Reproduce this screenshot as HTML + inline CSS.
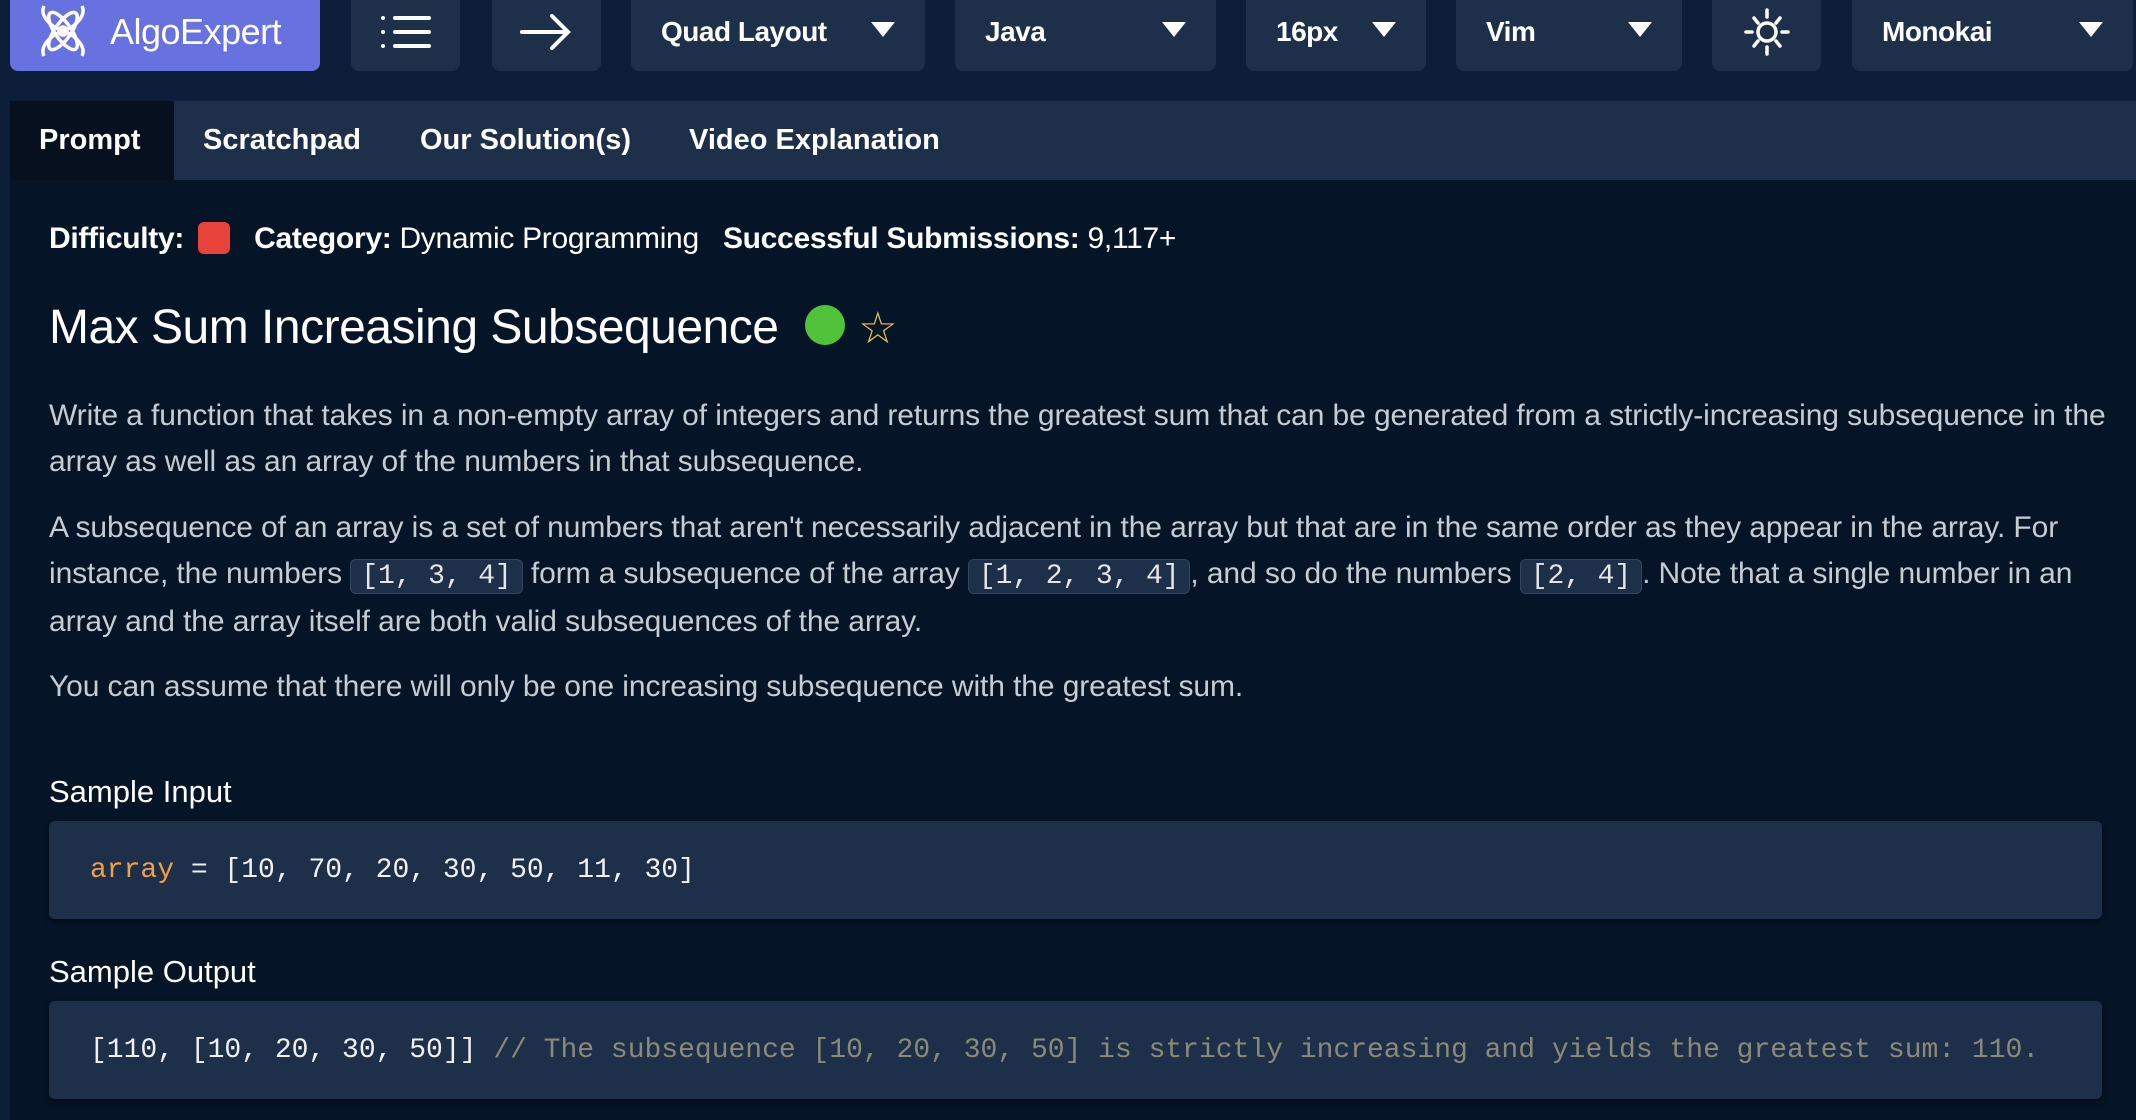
<!DOCTYPE html>
<html><head><meta charset="utf-8"><style>
*{margin:0;padding:0;box-sizing:border-box}
body{width:2136px;height:1120px;overflow:hidden;background:#0c1e3a;font-family:"Liberation Sans",sans-serif;color:#fff;position:relative}
.btn{position:absolute;top:0;height:71px;background:#1e2f4a;border-radius:0 0 8px 8px;display:flex;align-items:center;font-weight:bold;font-size:28px;letter-spacing:-0.5px;padding-bottom:8px}
.btn .tri{position:absolute;right:30px;top:22px;width:0;height:0;border-left:12px solid transparent;border-right:12px solid transparent;border-top:15px solid #fff}
.logo{left:10px;width:310px;background:#6772e0;font-weight:normal;font-size:36px;padding-left:100px}
.tabs{position:absolute;left:10px;top:101px;width:2126px;height:79px;background:#1e2f4a;font-weight:bold;font-size:29px}
.tab{position:absolute;top:0;height:79px;line-height:79px}
.content{position:absolute;left:10px;top:180px;width:2126px;height:940px;background:#061427}
.t{position:absolute;left:39px;white-space:nowrap}
p.t{font-size:30px;color:#c6ccd4;letter-spacing:-0.1px}
code{font-family:"Liberation Mono",monospace}
.chip{background:#1e2f4a;border:1px solid #34455f;border-radius:6px;padding:1px 10px;color:#e6e6e6;font-size:28px}
.box{position:absolute;left:39px;width:2053px;height:98px;background:#1e2f4a;border-radius:6px;box-shadow:0 3px 6px rgba(0,0,0,.5)}
.box code{position:absolute;left:41px;top:34px;font-size:28px;color:#f0f0f0;white-space:nowrap}
</style></head><body>
<div class="btn logo">
<svg style="position:absolute;left:26px;top:2px" width="54" height="58" viewBox="0 0 54 58" fill="none" stroke="#fff" stroke-width="3.5"><path d="M8 4 C4 12 12 24 27 29 C42 34 50 46 46 54 M46 4 C50 12 42 24 27 29 C12 34 4 46 8 54"/><ellipse cx="27" cy="29" rx="8" ry="22" transform="rotate(-35 27 29)"/><ellipse cx="27" cy="29" rx="8" ry="22" transform="rotate(35 27 29)"/><circle cx="27" cy="29" r="4"/></svg>
AlgoExpert</div>
<div class="btn" style="left:351px;width:109px"><svg style="margin-left:28px" width="54" height="40" viewBox="0 0 54 40" stroke="#fff" stroke-width="4" stroke-linecap="round"><path d="M4 6h0M4 20h0M4 34h0M16 6h34M16 20h34M16 34h34"/></svg></div>
<div class="btn" style="left:492px;width:109px"><svg style="margin-left:26px" width="56" height="40" viewBox="0 0 56 40" fill="none" stroke="#fff" stroke-width="4" stroke-linecap="round"><path d="M4 20h46M34 4l16 16-16 16"/></svg></div>
<div class="btn" style="left:631px;width:294px;padding-left:30px">Quad Layout<span class="tri"></span></div>
<div class="btn" style="left:955px;width:261px;padding-left:30px">Java<span class="tri"></span></div>
<div class="btn" style="left:1246px;width:180px;padding-left:30px">16px<span class="tri"></span></div>
<div class="btn" style="left:1456px;width:226px;padding-left:30px">Vim<span class="tri"></span></div>
<div class="btn" style="left:1712px;width:109px"><svg style="margin-left:30px" width="50" height="52" viewBox="0 0 50 52" fill="none" stroke="#fff" stroke-width="3.5" stroke-linecap="round"><circle cx="25" cy="26" r="9"/><path d="M25 4v7M25 41v7M4 26h6M40 26h6M12 12l4 5M38 12l-4 5M12 40l4-5M38 40l-4-5"/></svg></div>
<div class="btn" style="left:1852px;width:281px;padding-left:30px">Monokai<span class="tri"></span></div>
<div class="tabs">
<div class="tab" style="left:0;width:164px;background:#06101f;padding-left:29px">Prompt</div>
<div class="tab" style="left:193px">Scratchpad</div>
<div class="tab" style="left:410px">Our Solution(s)</div>
<div class="tab" style="left:679px">Video Explanation</div>
</div>
<div class="content">
<div class="t" style="top:42px;font-size:30px;color:#fff;letter-spacing:-0.3px"><b>Difficulty:</b> <span style="display:inline-block;width:32px;height:32px;background:#e8433a;border-radius:6px;vertical-align:-6px;margin:0 24px 0 6px"></span><b>Category:</b> Dynamic Programming &nbsp; <b>Successful Submissions:</b> 9,117+</div>
<div class="t" style="top:120px;font-size:48px;letter-spacing:-0.5px">Max Sum Increasing Subsequence <span style="display:inline-block;width:40px;height:40px;border-radius:50%;background:#4fc23a;vertical-align:-2px;margin-left:14px"></span> <span style="color:#e8c44a;font-size:44px">☆</span></div>
<p class="t" style="top:219px">Write a function that takes in a non-empty array of integers and returns the greatest sum that can be generated from a strictly-increasing subsequence in the</p>
<p class="t" style="top:265px">array as well as an array of the numbers in that subsequence.</p>
<p class="t" style="top:331px">A subsequence of an array is a set of numbers that aren't necessarily adjacent in the array but that are in the same order as they appear in the array. For</p>
<p class="t" style="top:377px">instance, the numbers <code class="chip">[1, 3, 4]</code> form a subsequence of the array <code class="chip">[1, 2, 3, 4]</code>, and so do the numbers <code class="chip">[2, 4]</code>. Note that a single number in an</p>
<p class="t" style="top:425px">array and the array itself are both valid subsequences of the array.</p>
<p class="t" style="top:490px">You can assume that there will only be one increasing subsequence with the greatest sum.</p>
<div class="t" style="top:594px;font-size:31px">Sample Input</div>
<div class="box" style="top:641px"><code><span style="color:#f0a04b">array</span> = [10, 70, 20, 30, 50, 11, 30]</code></div>
<div class="t" style="top:774px;font-size:31px">Sample Output</div>
<div class="box" style="top:821px"><code>[110, [10, 20, 30, 50]] <span style="color:#8a8a7a">// The subsequence [10, 20, 30, 50] is strictly increasing and yields the greatest sum: 110.</span></code></div>
</div>
</body></html>
